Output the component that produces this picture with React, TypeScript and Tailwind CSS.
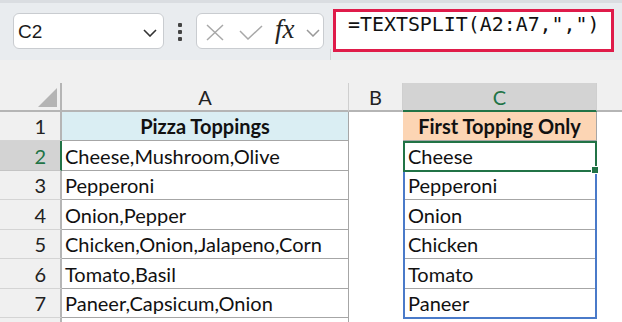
import React from "react";

const rows: [string, string][] = [
  ["Cheese,Mushroom,Olive", "Cheese"],
  ["Pepperoni", "Pepperoni"],
  ["Onion,Pepper", "Onion"],
  ["Chicken,Onion,Jalapeno,Corn", "Chicken"],
  ["Tomato,Basil", "Tomato"],
  ["Paneer,Capsicum,Onion", "Paneer"],
];
const heights = [30, 29, 30, 29, 30, 29];

const cellFont = { fontFamily: "Lato, 'Open Sans', sans-serif" };

export default function App() {
  return (
    <div className="relative w-[622px] h-[322px] overflow-hidden bg-white">
      {/* Toolbar */}
      <div className="h-[60px] bg-[#e9ecef] border-t-[3px] border-[#dadde1] flex items-start relative">
        <div className="absolute left-[13px] top-[10px] w-[151px] h-[36px] bg-white border border-[#c9ccd0] rounded-[6px] flex items-center pl-[4px]">
          <span className="text-[19px] text-[#1a1a1a] leading-none mt-[1px]" style={{ fontFamily: "'Liberation Sans', Arial, sans-serif" }}>C2</span>
          <svg className="absolute left-[129px] top-[15px]" width="14" height="8" viewBox="0 0 14 8">
            <path d="M1 1 L7 7 L13 1" fill="none" stroke="#333" strokeWidth="1.6" />
          </svg>
        </div>
        <div className="absolute left-[178px] top-[20px] flex flex-col gap-[3px]">
          <div className="w-[4px] h-[4px] bg-[#444] rounded-[1px]" />
          <div className="w-[4px] h-[4px] bg-[#444] rounded-[1px]" />
          <div className="w-[4px] h-[4px] bg-[#444] rounded-[1px]" />
        </div>
        <div className="absolute left-[196px] top-[10px] w-[128px] h-[36px] bg-white border border-[#c9ccd0] rounded-[6px]">
          <svg className="absolute left-[9px] top-[10px]" width="18" height="17" viewBox="0 0 18 17">
            <path d="M1 1 L17 16 M17 1 L1 16" fill="none" stroke="#a8a8a8" strokeWidth="1.5" />
          </svg>
          <svg className="absolute left-[42px] top-[11px]" width="24" height="15" viewBox="0 0 24 15">
            <path d="M1 6 L9 14 L23 1" fill="none" stroke="#a8a8a8" strokeWidth="1.5" />
          </svg>
          <span className="absolute left-[78px] top-[2px] text-[27px] italic leading-none text-[#222]" style={{ fontFamily: "'Liberation Serif', 'Times New Roman', serif" }}>fx</span>
          <svg className="absolute left-[109px] top-[15px]" width="14" height="8" viewBox="0 0 14 8">
            <path d="M1 1 L7 7 L13 1" fill="none" stroke="#999" strokeWidth="1.5" />
          </svg>
        </div>
        <div className="absolute left-[330px] top-[46px] w-px h-[11px] bg-[#d0d3d6]" />
        <div className="absolute left-[333px] top-[6px] w-[281px] h-[43px] bg-white border-[3px] border-[#df1b4a] flex items-start pl-[12px] pt-0">
          <span className="text-[19.9px] leading-[26px] text-[#111] whitespace-nowrap" style={{ fontFamily: "'DejaVu Sans Mono', monospace" }}>=TEXTSPLIT(A2:A7,",")</span>
        </div>
      </div>
      <div className="h-[23px] bg-[#f0f0f0]" />

      {/* Grid */}
      <div className="relative grid grid-cols-[62px_287px_54px_194px_1fr]" style={cellFont}>
        {/* Column header row */}
        <div className="h-[29px] bg-[#f0f0f0] border-r-2 border-r-[#b5b5b5] border-b-2 border-b-[#b5b5b5] relative">
          <svg className="absolute left-[38px] top-[5px]" width="19" height="19" viewBox="0 0 19 19">
            <path d="M19 0 L19 19 L0 19 Z" fill="#b4b4b4" />
          </svg>
        </div>
        <div className="h-[29px] bg-[#f0f0f0] border-r border-r-[#cfcfcf] border-b-2 border-b-[#b5b5b5] flex items-center justify-center text-[20px] text-[#222]">A</div>
        <div className="h-[29px] bg-[#f0f0f0] border-r border-r-[#cfcfcf] border-b-2 border-b-[#b5b5b5] flex items-center justify-center text-[20px] text-[#222]">B</div>
        <div className="h-[29px] bg-[#d3d3d3] border-r border-r-[#cfcfcf] border-b-2 border-b-[#217346] flex items-center justify-center text-[20px] text-[#217346]">C</div>
        <div className="h-[29px] bg-[#f0f0f0] border-b-2 border-b-[#b5b5b5]" />

        {/* Row 1 */}
        <div className="h-[29px] bg-[#f0f0f0] border-r-2 border-r-[#b5b5b5] border-b border-b-[#d4d4d4] flex items-center justify-end pr-[14px] text-[20px] text-[#222]">1</div>
        <div className="h-[29px] bg-[#daeef3] border-r border-b border-[#a6a6a6] flex items-center justify-center text-[20px] font-bold text-[#111]">Pizza Toppings</div>
        <div className="h-[29px] bg-white" />
        <div className="h-[29px] bg-[#fcd5b4] border-r border-b border-[#a6a6a6] flex items-center justify-center text-[20px] font-bold text-[#111]">First Topping Only</div>
        <div className="h-[29px] bg-white" />

        {rows.map(([a, c], i) => {
          const h = heights[i];
          const sel = i === 0;
          return (
            <React.Fragment key={i}>
              <div
                className={
                  sel
                    ? "bg-[#d3d3d3] border-r-2 border-r-[#217346] border-b border-b-[#c4c4c4] flex items-center justify-end pr-[14px] text-[20px] text-[#217346]"
                    : "bg-[#f0f0f0] border-r-2 border-r-[#b5b5b5] border-b border-b-[#d4d4d4] flex items-center justify-end pr-[14px] text-[20px] text-[#222]"
                }
                style={{ height: h }}
              >
                {i + 2}
              </div>
              <div className="bg-white border-r border-b border-[#a6a6a6] flex items-center pl-[3px] text-[20px] text-[#111] whitespace-nowrap overflow-hidden" style={{ height: h }}>
                {a}
              </div>
              <div className="bg-white" style={{ height: h }} />
              <div className="bg-white border-r border-b border-[#a6a6a6] flex items-center pl-[5px] text-[20px] text-[#111] whitespace-nowrap" style={{ height: h }}>
                {c}
              </div>
              <div className="bg-white" style={{ height: h }} />
            </React.Fragment>
          );
        })}
        {/* Row 8 partial */}
        <div className="h-[20px] bg-[#f0f0f0] border-r-2 border-r-[#b5b5b5]" />
        <div className="h-[20px] bg-white border-r border-[#a6a6a6]" />
        <div className="h-[20px] bg-white" />
        <div className="h-[20px] bg-white" />
        <div className="h-[20px] bg-white" />

        {/* Spill range outline C2:C7 */}
        <div className="absolute left-[403px] top-[58px] w-[194px] h-[178px] border-2 border-[#4a7ac9] pointer-events-none" />
        {/* Selection C2 */}
        <div className="absolute left-[403px] top-[58px] w-[194px] h-[31px] border-2 border-[#217346] pointer-events-none" />
        <div className="absolute left-[591px] top-[83px] w-[8px] h-[8px] bg-[#217346] border border-white pointer-events-none" />
      </div>
    </div>
  );
}
